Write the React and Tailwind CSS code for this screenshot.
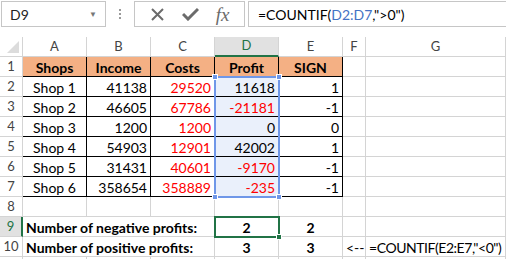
import React from 'react';

const COLS = [
  { key: 'A', w: 'w-[64px]' },
  { key: 'B', w: 'w-[64px]' },
  { key: 'C', w: 'w-[64px]' },
  { key: 'D', w: 'w-[64px]' },
  { key: 'E', w: 'w-[64px]' },
  { key: 'F', w: 'w-[23px]' },
  { key: 'G', w: 'flex-1' },
];

const shops = [
  ['Shop 1', 41138, 29520, 11618, 1],
  ['Shop 2', 46605, 67786, -21181, -1],
  ['Shop 3', 1200, 1200, 0, 0],
  ['Shop 4', 54903, 12901, 42002, 1],
  ['Shop 5', 31431, 40601, -9170, -1],
  ['Shop 6', 358654, 358889, -235, -1],
];

function Cell({ w, className = '', children }) {
  return (
    <div className={`${w} h-full shrink-0 border-r border-b border-[#d4d4d4] flex items-end pb-[1px] px-[3px] leading-none whitespace-nowrap overflow-visible ${className}`}>
      {children}
    </div>
  );
}

function RowHead({ n, active }) {
  return (
    <div className={`w-[23px] h-full shrink-0 border-b border-[#d4d4d4] flex items-center justify-center text-[13px] ${active ? 'bg-[#e1e1e1] text-[#217346] border-r-2 border-r-[#217346]' : 'bg-white text-[#444] border-r border-r-[#d4d4d4]'}`}>
      {n}
    </div>
  );
}

export default function App() {
  const tbl = 'border-r-black border-b-black';
  return (
    <div className="w-[506px] h-[259px] overflow-hidden bg-white relative text-[14px] text-black" style={{ fontFamily: 'Lato, "Liberation Sans", sans-serif' }}>
      {/* formula bar */}
      <div className="h-[28px] flex items-start pt-[1px] relative">
        <div className="ml-[1px] w-[105px] h-[26px] border border-[#c6c6c6] flex items-center justify-between px-[8px]">
          <span className="text-[14px] text-[#222]">D9</span>
          <span className="text-[8px] text-[#777]">▼</span>
        </div>
        <div className="w-[28px] h-[26px] flex flex-col items-center justify-center gap-[2px]">
          <span className="w-[2px] h-[2px] bg-[#9a9a9a]" />
          <span className="w-[2px] h-[2px] bg-[#9a9a9a]" />
          <span className="w-[2px] h-[2px] bg-[#9a9a9a]" />
        </div>
        <div className="w-[111px] h-[26px] border border-[#c6c6c6] flex items-center justify-around px-[6px]">
          <svg width="15" height="15" viewBox="0 0 15 15">
            <path d="M2 2 L13 13 M13 2 L2 13" stroke="#6b6b6b" strokeWidth="2" />
          </svg>
          <svg width="17" height="14" viewBox="0 0 17 14">
            <path d="M1 7 L6 12 L16 2" stroke="#6b6b6b" strokeWidth="3" fill="none" />
          </svg>
          <span className="text-[19px] italic text-[#6b6b6b] leading-none" style={{ fontFamily: '"Liberation Serif", serif' }}>fx</span>
        </div>
        <div className="ml-[3px] flex-1 h-[26px] border border-r-0 border-[#c6c6c6] flex items-center pl-[9px] text-[14px]">
          =COUNTIF(<span className="text-[#4472c4]">D2:D7</span>,"&gt;0")
        </div>
      </div>
      <div className="h-[9px]" />

      {/* column headers */}
      <div className="h-[20px] flex">
        <div className="w-[23px] h-full shrink-0 border-r border-b border-[#d4d4d4] relative">
          <div className="absolute right-[3px] bottom-[3px] w-0 h-0 border-l-[12px] border-l-transparent border-b-[12px] border-b-[#dcdcdc]" />
        </div>
        {COLS.map((c) => (
          <div key={c.key} className={`${c.w} h-full shrink-0 flex items-center justify-center text-[13px] border-r border-[#d4d4d4] ${c.key === 'D' ? 'bg-[#e1e1e1] text-[#217346] border-b-2 border-b-[#217346]' : 'text-[#444] border-b border-b-[#d4d4d4]'}`}>
            {c.key}
          </div>
        ))}
      </div>

      {/* row 1 */}
      <div className="h-[20px] flex">
        <RowHead n={1} />
        {['Shops', 'Income', 'Costs', 'Profit', 'SIGN'].map((t) => (
          <Cell key={t} w="w-[64px]" className={`bg-[#f4b084] font-bold justify-center ${tbl}`}>{t}</Cell>
        ))}
        <Cell w="w-[23px]" />
        <Cell w="flex-1" />
      </div>

      {shops.map((s, i) => (
        <div key={s[0]} className="h-[20px] flex">
          <RowHead n={i + 2} />
          <Cell w="w-[64px]" className={`justify-center ${tbl}`}>{s[0]}</Cell>
          <Cell w="w-[64px]" className={`justify-end ${tbl}`}>{s[1]}</Cell>
          <Cell w="w-[64px]" className={`justify-end text-[#ff0000] ${tbl}`}>{s[2]}</Cell>
          <Cell w="w-[64px]" className={`justify-end bg-[#eaf0fb] ${tbl} ${s[3] < 0 ? 'text-[#ff0000]' : ''}`}>{s[3]}</Cell>
          <Cell w="w-[64px]" className={`justify-end ${tbl}`}>{s[4]}</Cell>
          <Cell w="w-[23px]" />
          <Cell w="flex-1" />
        </div>
      ))}

      {/* row 8 */}
      <div className="h-[20px] flex">
        <RowHead n={8} />
        {COLS.map((c) => <Cell key={c.key} w={c.w} />)}
      </div>

      {/* row 9 */}
      <div className="h-[20px] flex">
        <RowHead n={9} active />
        <Cell w="w-[192px]" className="font-bold">Number of negative profits:</Cell>
        <Cell w="w-[64px]" className="font-bold justify-center">2</Cell>
        <Cell w="w-[64px]" className="font-bold justify-center">2</Cell>
        <Cell w="w-[23px]" />
        <Cell w="flex-1" />
      </div>

      {/* row 10 */}
      <div className="h-[20px] flex">
        <RowHead n={10} />
        <Cell w="w-[192px]" className="font-bold">Number of positive profits:</Cell>
        <Cell w="w-[64px]" className="font-bold justify-center">3</Cell>
        <Cell w="w-[64px]" className="font-bold justify-center">3</Cell>
        <Cell w="w-[23px]">&lt;--</Cell>
        <Cell w="flex-1" className="tracking-[-0.45px]">=COUNTIF(E2:E7,"&lt;0")</Cell>
      </div>

      {/* row 11 (partial, only gridlines visible) */}
      <div className="h-[20px] flex">
        <RowHead n="" />
        {COLS.map((c) => <Cell key={c.key} w={c.w} />)}
      </div>

      {/* reference highlight D2:D7 */}
      <div className="absolute left-[214px] top-[76px] w-[66px] h-[122px] border-2 border-[#6f97e8] pointer-events-none">
        <span className="absolute -left-[4px] -top-[4px] w-[6px] h-[6px] bg-[#6f97e8] border border-white" />
        <span className="absolute -right-[4px] -top-[4px] w-[6px] h-[6px] bg-[#6f97e8] border border-white" />
        <span className="absolute -left-[4px] -bottom-[4px] w-[6px] h-[6px] bg-[#6f97e8] border border-white" />
        <span className="absolute -right-[4px] -bottom-[4px] w-[6px] h-[6px] bg-[#6f97e8] border border-white" />
      </div>

      {/* active cell D9 */}
      <div className="absolute left-[214px] top-[216px] w-[66px] h-[22px] border-2 border-[#217346] pointer-events-none">
        <span className="absolute -right-[4px] -bottom-[4px] w-[6px] h-[6px] bg-[#217346] border border-white" />
      </div>
    </div>
  );
}
